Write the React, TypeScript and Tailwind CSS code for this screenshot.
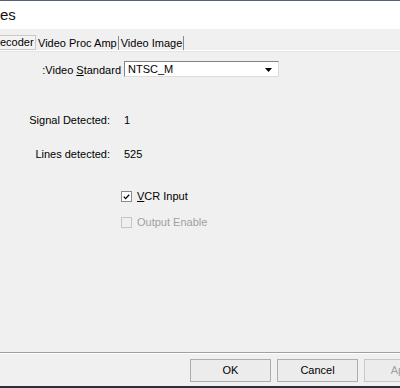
import React from "react";

export default function App() {
  return (
    <div
      className="w-[400px] h-[388px] bg-[#f0f0f0] flex flex-col overflow-hidden text-[11px] text-black"
      style={{ fontFamily: "'Liberation Sans', Arial, sans-serif" }}
    >
      <div className="h-px bg-[#56627a]" />
      <div className="h-[28px] bg-white flex items-center pl-0 pb-[2px]">
        <span className="text-[15px] leading-none text-[#111]">es</span>
      </div>
      {/* tab row */}
      <div className="mt-[7px] h-[14px] flex items-end">
        <div className="h-[15px] w-[36px] border border-[#c8c8c8] border-l-0 bg-[#f4f4f4] flex items-center pl-0 leading-none">
          ecoder
        </div>
        <div className="h-[14px] pl-[2px] pr-[1px] border-r border-[#8a8a8a] flex items-center leading-none">
          Video Proc Amp
        </div>
        <div className="h-[14px] pl-[2px] pr-[1px] border-r border-[#8a8a8a] flex items-center leading-none">
          Video Image
        </div>
      </div>
      {/* panel */}
      <div className="flex-1 border-t border-white shadow-[inset_0_1px_0_#e3e3e3] flex flex-col">
        <div className="mt-[10px] flex items-end">
          <div className="w-[121px] text-right leading-none pb-[1px]">:Video <span className="underline">S</span>tandard</div>
          <div className="ml-[3px] w-[155px] h-[16px] bg-white border border-t-[#838383] border-l-[#838383] border-r-[#dcdcdc] border-b-[#dcdcdc] flex items-start justify-between pl-[3px] pr-[6px] leading-none pt-[2px]">
            <span>NTSC_M</span>
            <svg width="7" height="4" viewBox="0 0 7 4" className="mt-[4px]">
              <polygon points="0,0 7,0 3.5,4" fill="#000" />
            </svg>
          </div>
        </div>
        <div className="mt-[38px] flex items-center leading-none">
          <div className="w-[110px] text-right">Signal Detected:</div>
          <div className="ml-[14px]">1</div>
        </div>
        <div className="mt-[23px] flex items-center leading-none">
          <div className="w-[110px] text-right">Lines detected:</div>
          <div className="ml-[14px]">525</div>
        </div>
        <div className="mt-[31px] ml-[121px] flex items-center leading-none">
          <div className="w-[11px] h-[11px] bg-white border border-[#8a8a8a] flex items-center justify-center">
            <svg width="7" height="6" viewBox="0 0 7 6">
              <polyline points="0.8,2.6 2.6,4.6 6.2,0.8" fill="none" stroke="#000" strokeWidth="1.3" />
            </svg>
          </div>
          <div className="ml-[5px]"><span className="underline">V</span>CR Input</div>
        </div>
        <div className="mt-[15px] ml-[121px] flex items-center leading-none">
          <div className="w-[11px] h-[11px] bg-[#f0f0f0] border border-[#c6c6c6]" />
          <div className="ml-[5px] text-[#a0a0a0]">Output Enable</div>
        </div>
        <div className="flex-1" />
        <div className="h-px bg-[#a0a0a0]" />
        <div className="h-px bg-white" />
        <div className="mt-[5px] flex gap-[6px] pl-[190px] h-[23px]">
          <div className="w-[81px] shrink-0 border border-[#adadad] bg-[#ececec] flex items-center justify-center">OK</div>
          <div className="w-[81px] shrink-0 border border-[#adadad] bg-[#ececec] flex items-center justify-center">Cancel</div>
          <div className="w-[81px] shrink-0 border border-[#c8c8c8] bg-[#ececec] flex items-center justify-center text-[#a0a0a0]">Apply</div>
        </div>
        <div className="h-[4px]" />
        <div className="h-[2px] bg-[#2c3038]" />
      </div>
    </div>
  );
}
